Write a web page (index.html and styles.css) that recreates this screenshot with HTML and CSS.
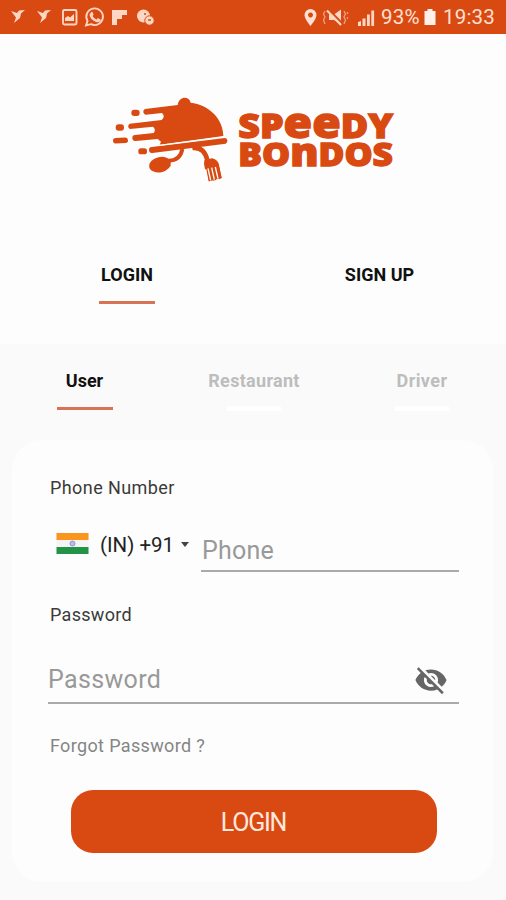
FILE: index.html
```html
<!DOCTYPE html>
<html lang="en">
<head>
<meta charset="utf-8">
<title>Speedy Bondos</title>
<link rel="stylesheet" href="styles.css">
</head>
<body>
<header class="status">
  <svg class="notif" viewBox="0 0 170 34" aria-hidden="true">
    <g fill="#ffd6c4">
      <path d="M11 11 L17 13 L19 10.500 L25 10 L21 13.500 L20 18 L14 23 L16 17.500 Z"/>
      <path d="M37 11 L43 13 L45 10.500 L51 10 L47 13.500 L46 18 L40 23 L42 17.500 Z"/>
      <path d="M65 21 V18 L68 16 L70 17.500 L74 14 V21 Z"/>
      <path d="M91 12.500 Q92 11 93 13 L93.500 15 L92.500 16 Q94 18.500 96.500 19.500 L98 18 L101 20 Q99.500 23 96 22 Q90 19.500 89.500 14.500 Z"/>
      <path d="M112 10 H127 V15 H122 V19 H117 V25 H112 Z"/>
      <circle cx="143.500" cy="16" r="6.500"/>
      <circle cx="149.500" cy="20.500" r="4.700" stroke="#d94a12"/>
    </g>
    <g fill="none" stroke="#ffd6c4" stroke-width="1.900">
      <rect x="63" y="10" width="13.500" height="14.500" rx="1.500"/>
      <path d="M86 25.500 L87.500 21 A8.300 8.300 0 1 1 91 24.200 Z"/>
    </g>
    <path d="M144 14 h2 M148 20 h3" stroke="#d94a12" stroke-width="1.500"/>
  </svg>
  <div class="sysinfo">
    <svg class="signals" viewBox="0 0 76 34" aria-hidden="true">
      <path fill="#ffe0d2" fill-rule="evenodd" d="M10.500 9 A6 6 0 0 1 16.500 15 C16.500 19 10.500 26 10.500 26 C10.500 26 4.500 19 4.500 15 A6 6 0 0 1 10.500 9 Z M10.500 12.500 a2.500 2.500 0 1 0 .01 0 Z"/>
      <path fill="#ffd6c4" d="M29 14.500 h5 l7-5 v15 l-7-4.500 h-5 Z"/>
      <path d="M29 10 L42 23" stroke="#d94a12" stroke-width="2"/>
      <path d="M27 10.500 L41 25" stroke="#ffd6c4" stroke-width="2"/>
      <path d="M25 11 l-1.500 3 l1.500 3 l-1.500 3 l1.500 4 M44 11 l1.500 3 l-1.500 3 l1.500 3 l-1.500 4 M47.500 12 v2 M47.500 17 v2" fill="none" stroke="#efa183" stroke-width="1.300"/>
      <path fill="#ffd6c4" d="M58 22 l3-1 v5 h-3 Z M62.500 18.500 h3 V26 h-3 Z M67 14.500 h2.800 V26 H67 Z M71.300 10.500 h2.800 V26 h-2.800 Z"/>
    </svg>
    <span class="pct">93%</span>
    <svg class="battery" viewBox="0 0 12 18" aria-hidden="true"><path fill="#fff0e8" d="M3.500 1 h5 v2 H11.500 V17 H.5 V3 H3.500 Z"/></svg>
    <span class="clock">19:33</span>
  </div>
</header>

<section class="top">
  <svg class="logo" viewBox="0 0 888 300" role="img">
    <g fill="#d94a12">
      <path d="M120 57 L218 45 C222 17 253 17 257 38 C310 43 355 86 355 138 L164 164 L168 155 L158 147 L92 153 A9 9 0 0 1 90 135 L146 129 Q154 119 144 110 L75 117 A9 9 0 0 1 74 101 L170 90 Q182 79 171 69 L122 74 A9 9 0 0 1 120 57 Z"/>
      <path d="M140 171 L360 144 A9 9 0 0 1 362 161 L142 189 A9 9 0 0 1 140 171 Z"/>
      <rect x="79" y="59" width="25" height="19" rx="9"/>
      <rect x="32" y="103" width="25" height="19" rx="9"/>
      <rect x="24" y="143" width="45" height="17" rx="8" transform="rotate(-3 46 151)"/>
      <rect x="100" y="175" width="26" height="18" rx="8"/>
      <ellipse cx="165" cy="224" rx="33" ry="23" transform="rotate(-12 165 224)"/>
      <path d="M298 211 L321 205 Q337 208 341 222 L350 264 L342 268 L335 236 L333 270 L324 272 L319 237 L320 272 L311 274 L304 238 L300 238 Q295 222 298 211 Z"/>
      <path d="M303 225 L340 218 L350 264 L312 274 Z"/>
    </g>
    <g fill="none" stroke="#d94a12" stroke-width="12">
      <path d="M190 212 Q226 212 232 177"/>
      <path d="M262 174 Q297 169 307 210" stroke-width="14"/>
    </g>
    <path d="M164 166 L355 141" stroke="#fdfdfd" stroke-width="3"/>
    <path d="M309 235 l8 36 M320 233 l8 36 M331 231 l8 35" stroke="#fdfdfd" stroke-width="4"/>
    <g class="wordmark">
      <text x="400" y="144" font-size="102" textLength="464" lengthAdjust="spacingAndGlyphs">SP<tspan font-size="126">ee</tspan>DY</text>
      <text x="400" y="227" font-size="95" textLength="464" lengthAdjust="spacingAndGlyphs">BO<tspan font-size="114">n</tspan>DOS</text>
    </g>
  </svg>
  <nav class="modes">
    <a class="mode login on">LOGIN</a>
    <a class="mode">SIGN UP</a>
  </nav>
</section>

<main class="main">
  <nav class="roles">
    <a class="role on">User</a>
    <a class="role restaurant">Restaurant</a>
    <a class="role driver">Driver</a>
  </nav>
  <form class="card">
    <label class="label number">Phone Number</label>
    <div class="phone-row">
      <div class="country">
        <svg class="flag" viewBox="0 0 32 21" aria-hidden="true">
          <rect width="32" height="21" fill="#f5f5f5"/>
          <rect width="32" height="7" fill="#fa961e"/>
          <rect y="14" width="32" height="7" fill="#239347"/>
          <circle cx="16" cy="10.500" r="2.500" fill="#bcbcec" stroke="#9292cb"/>
        </svg>
        <span class="code">(IN) +91</span>
        <span class="caret"></span>
      </div>
      <div class="field phone">Phone</div>
    </div>
    <label class="label pass">Password</label>
    <div class="field password">
      <span>Password</span>
      <svg class="eye" viewBox="0 0 24 24" aria-hidden="true"><path fill="#666" d="M12 7c2.760 0 5 2.240 5 5 0 .650-.130 1.260-.360 1.830l2.920 2.920c1.510-1.260 2.700-2.890 3.430-4.750-1.730-4.390-6-7.500-11-7.500-1.400 0-2.740.250-3.980.700l2.160 2.160C10.740 7.130 11.350 7 12 7zM2 4.270l2.280 2.280.460.460C3.080 8.300 1.780 10.020 1 12c1.730 4.390 6 7.500 11 7.500 1.550 0 3.030-.300 4.380-.840l.420.420L19.730 22 21 20.730 3.270 3 2 4.270zM7.530 9.800l1.550 1.550c-.050.210-.080.430-.080.650 0 1.660 1.340 3 3 3 .220 0 .440-.030.650-.080l1.550 1.550c-.670.330-1.410.530-2.200.530-2.760 0-5-2.240-5-5 0-.790.200-1.530.530-2.200zm4.310-.780l3.150 3.150.020-.160c0-1.660-1.340-3-3-3l-.170.010z"/></svg>
    </div>
    <a class="forgot">Forgot Password ?</a>
    <button class="submit" type="button">LOGIN</button>
  </form>
</main>
</body>
</html>
```

FILE: styles.css
```css
* { box-sizing: border-box; }
body {
  margin: 0;
  width: 506px;
  height: 900px;
  overflow: hidden;
  display: flex;
  flex-direction: column;
  background: #fafafa;
  font-family: Roboto, sans-serif;
}
.status {
  height: 34px;
  flex: none;
  display: flex;
  justify-content: space-between;
  background: #d94a12;
  color: #ffe0d2;
}
.notif { width: 170px; height: 34px; }
.sysinfo { display: flex; align-items: center; padding-right: 10px; }
.signals { width: 76px; height: 34px; margin-right: 5px; }
.pct { font-size: 20.5px; width: 43px; line-height: 36px; letter-spacing: .2px; }
.battery { width: 12px; height: 18px; margin-right: 7px; }
.clock { font-size: 20.5px; width: 53px; line-height: 36px; letter-spacing: .2px; }
.top {
  height: 310px;
  flex: none;
  background: #fdfdfd;
  padding-top: 56px;
}
.logo { display: block; width: 296px; height: 100px; margin-left: 105px; }
.wordmark {
  fill: #d94a12;
  stroke: #d94a12;
  stroke-width: 4px;
  font-family: "Open Sans", sans-serif;
  font-weight: 800;
}
.modes { display: flex; margin-top: 74px; }
.mode {
  width: 253px;
  height: 40px;
  display: flex;
  flex-direction: column;
  align-items: center;
  font-size: 18px;
  font-weight: 700;
  line-height: 21px;
  color: #111;
}
.mode.login { padding-left: 1px; }
.on::after {
  content: "";
  width: 56px;
  height: 3px;
  background: #d87355;
  margin-top: 16px;
}
.main { flex: 1; padding: 26px 13px 18px 12px; }
.roles { display: flex; height: 70px; }
.role {
  width: 145px;
  display: flex;
  flex-direction: column;
  align-items: center;
  font-size: 18px;
  font-weight: 700;
  line-height: 21px;
  color: #bdbdbd;
}
.role.on { color: #111; }
.role.restaurant { width: 194px; letter-spacing: .3px; }
.role.driver { width: 142px; letter-spacing: .4px; }
.restaurant::after, .driver::after {
  content: "";
  width: 54px;
  height: 5px;
  background: #fff;
  margin-top: 15px;
}
.card {
  height: 442px;
  background: #fdfdfd;
  border-radius: 30px;
  padding: 37px 34px 0 36px;
  display: flex;
  flex-direction: column;
}
.label {
  font-size: 18px;
  line-height: 21px;
  padding-left: 2px;
  color: #3a3a3a;
}
.number { letter-spacing: .42px; }
.pass { letter-spacing: .3px; }
.phone-row { height: 74px; display: flex; margin-bottom: 32px; }
.country { width: 153px; display: flex; align-items: center; padding: 19px 0 0 8px; }
.flag { width: 33px; height: 21px; margin: -2px 11px 0 0; }
.code { font-size: 20.5px; color: #222; }
.caret {
  border: 4px solid transparent;
  border-top: 5px solid #444;
  border-bottom: 0;
  margin-left: 7px;
}
.field {
  font-size: 25px;
  color: #999;
  border-bottom: 2px solid #aaa;
  line-height: 30px;
}
.phone { flex: 1; padding: 38px 0 0 1px; letter-spacing: .2px; }
.password {
  height: 79px;
  padding-top: 40px;
  display: flex;
  justify-content: space-between;
  letter-spacing: .35px;
}
.eye { width: 34px; height: 34px; margin: -2px 11px 0 0; }
.forgot {
  margin: 31px 0 0 2px;
  font-size: 18px;
  line-height: 21px;
  letter-spacing: .35px;
  color: #858585;
}
.submit {
  width: 366px;
  height: 63px;
  margin: 34px 0 0 23px;
  border: 0;
  border-radius: 22px;
  background: #d94a12;
  color: #ffe9df;
  font: 400 25px/65px Roboto, sans-serif;
  letter-spacing: -1.2px;
  padding: 0 1px 0 0;
}
```
